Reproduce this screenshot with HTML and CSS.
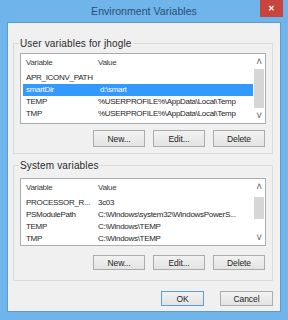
FILE: index.html
```html
<!DOCTYPE html>
<html lang="en">
<head>
    <meta charset="UTF-8">
    <title>Environment Variables</title>
    <link rel="stylesheet" href="styles.css">
</head>
<body>
    <div class="window">
        <!-- Title bar -->
        <div class="titlebar">
            <span class="title">Environment Variables</span>
            <span class="close">&#x2715;</span>
        </div>

        <div class="client">
            <!-- User variables -->
            <div class="group group-user">
                <div class="group-label">User variables for jhogle</div>
                <div class="list list-user">
                    <div class="list-body">
                        <div class="row head"><span>Variable</span><span>Value</span></div>
                        <div class="row"><span>APR_ICONV_PATH</span><span></span></div>
                        <div class="row selected"><span>smartDir</span><span>d:\smart</span></div>
                        <div class="row"><span>TEMP</span><span>%USERPROFILE%\AppData\Local\Temp</span></div>
                        <div class="row"><span>TMP</span><span>%USERPROFILE%\AppData\Local\Temp</span></div>
                    </div>
                    <div class="scrollbar">
                        <span class="arrow">&#x2C4;</span>
                        <span class="thumb thumb-user"></span>
                        <span class="arrow arrow-down">&#x2C5;</span>
                    </div>
                </div>
                <div class="buttons">
                    <button class="btn">New...</button>
                    <button class="btn">Edit...</button>
                    <button class="btn">Delete</button>
                </div>
            </div>

            <!-- System variables -->
            <div class="group group-system">
                <div class="group-label">System variables</div>
                <div class="list list-system">
                    <div class="list-body">
                        <div class="row head"><span>Variable</span><span>Value</span></div>
                        <div class="row"><span>PROCESSOR_R...</span><span>3c03</span></div>
                        <div class="row"><span>PSModulePath</span><span>C:\Windows\system32\WindowsPowerS...</span></div>
                        <div class="row"><span>TEMP</span><span>C:\Windows\TEMP</span></div>
                        <div class="row"><span>TMP</span><span>C:\Windows\TEMP</span></div>
                    </div>
                    <div class="scrollbar">
                        <span class="arrow">&#x2C4;</span>
                        <span class="thumb thumb-system"></span>
                        <span class="arrow arrow-down">&#x2C5;</span>
                    </div>
                </div>
                <div class="buttons">
                    <button class="btn">New...</button>
                    <button class="btn">Edit...</button>
                    <button class="btn">Delete</button>
                </div>
            </div>

            <div class="dialog-buttons">
                <button class="btn btn-ok">OK</button>
                <button class="btn btn-cancel">Cancel</button>
            </div>
        </div>
    </div>
</body>
</html>
```

FILE: styles.css
```css
body {
    margin: 0;
    font-family: "Liberation Sans", Arial, sans-serif;
    background: #6fb4ea;
}
.window {
    width: 288px;
    height: 320px;
    box-sizing: border-box;
    padding: 0 7px 8px 7px;
    background: #6fb4ea;
}
.titlebar {
    height: 22px;
    margin: 0 -7px;
    padding-right: 5px;
    display: flex;
    align-items: flex-start;
}
.title {
    flex: 1;
    padding-left: 28px;
    text-align: center;
    line-height: 22px;
    font-size: 10.6px;
    color: #2b4f73;
}
.close {
    width: 23px;
    height: 17px;
    background: #c9443c;
    color: #fff;
    font-size: 8px;
    font-weight: bold;
    line-height: 17px;
    text-align: center;
}
.client {
    height: 290px;
    box-sizing: border-box;
    border: 1px solid #5a9cd2;
    background: #f0f0f0;
    display: flex;
    flex-direction: column;
    font-size: 8px;
    letter-spacing: -0.2px;
    color: #1e1e1e;
}
.group {
    border: 1px solid #dcdcdc;
    margin: 20px 7px 0 5px;
    padding: 0 6px 6px 6px;
}
.group-system {
    margin-top: 11px;
    padding-bottom: 10px;
}
.group-label {
    width: fit-content;
    height: 13px;
    line-height: 13px;
    margin: -7px 0 0 -1px;
    padding: 0 1px;
    background: #f0f0f0;
    font-size: 10px;
    letter-spacing: 0.15px;
    color: #2a2a2a;
}
.list {
    display: flex;
    border: 1px solid #abadb3;
    background: #fff;
    margin-top: 3px;
    height: 71px;
    box-sizing: border-box;
    overflow: hidden;
}
.list-system {
    margin-top: 6px;
    height: 68px;
}
.list-body {
    flex: 1;
    min-width: 0;
}
.row {
    display: grid;
    grid-template-columns: 72px 1fr;
    height: 12px;
    line-height: 12px;
    letter-spacing: -0.3px;
    white-space: nowrap;
    overflow: hidden;
}
.row span {
    padding-left: 5px;
    overflow: hidden;
}
.row span:first-child {
    overflow: visible;
}
.row.head {
    height: 18px;
    line-height: 18px;
    color: #3c3c3c;
}
.row.selected {
    background: #3399ff;
    color: #fff;
    margin-left: 2px;
}
.row.selected span:first-child {
    padding-left: 3px;
}
.scrollbar {
    width: 12px;
    display: flex;
    flex-direction: column;
    align-items: center;
    background: #fff;
}
.arrow {
    height: 15px;
    line-height: 15px;
    font-size: 10px;
    color: #606060;
}
.arrow-down {
    margin-top: auto;
    height: 12px;
    line-height: 10px;
}
.thumb {
    width: 10px;
    background: #d6d6d6;
}
.thumb-user {
    height: 39px;
}
.thumb-system {
    height: 22px;
    margin-top: 3px;
}
.buttons {
    display: flex;
    justify-content: flex-end;
    gap: 8px;
    margin-top: 6px;
    padding-right: 1px;
}
.group-system .buttons {
    margin-top: 9px;
}
.btn {
    width: 52px;
    height: 17px;
    padding: 0;
    border: 1px solid #acacac;
    background: linear-gradient(#f2f2f2, #e3e3e3);
    font-family: "Liberation Sans", Arial, sans-serif;
    font-size: 8.5px;
    letter-spacing: -0.1px;
    color: #1e1e1e;
}
.group-system .btn {
    height: 15px;
}
.dialog-buttons {
    display: flex;
    justify-content: flex-end;
    gap: 16px;
    margin: 10px 7px 0 0;
}
.btn-ok {
    width: 43px;
    height: 15px;
    border-color: #5aa0d8;
}
.btn-cancel {
    width: 53px;
    height: 15px;
}
```
